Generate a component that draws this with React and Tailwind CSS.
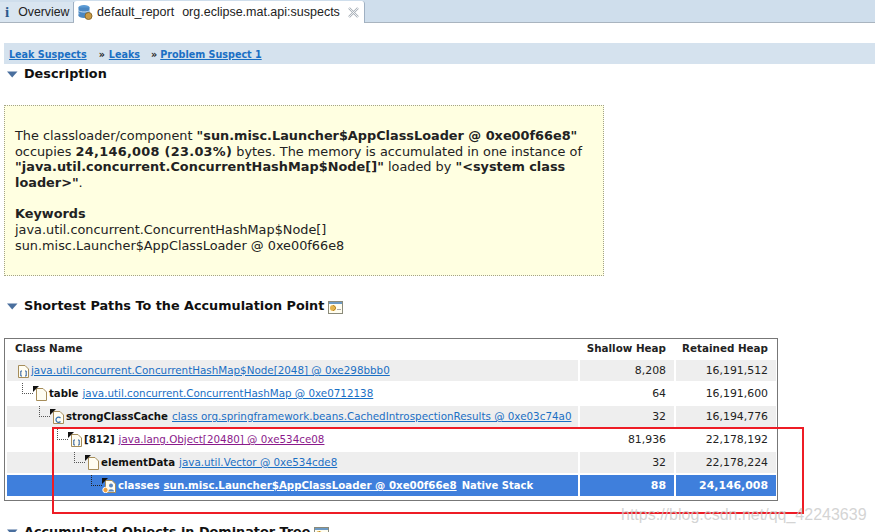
const font = "font-['DejaVu_Sans',sans-serif]";

function Triangle() {
  return (
    <svg width="11" height="7" viewBox="0 0 11 7" className="shrink-0">
      <path d="M0 0.5 H10.5 L5.2 6.5 Z" fill="#4a6f9e" />
    </svg>
  );
}

function Heading({ children, icon }) {
  return (
    <div className="flex items-center gap-[6px] pl-[7px] h-[18px] text-[12.8px] font-bold text-[#111]">
      <Triangle />
      <span className="whitespace-nowrap">{children}</span>
      {icon && <ExportIcon />}
    </div>
  );
}

function ExportIcon() {
  return (
    <svg width="15" height="14" viewBox="0 0 15 14" className="shrink-0 mt-[2px] -ml-[2px]">
      <rect x="0.5" y="1.5" width="14" height="12" fill="#fffdf0" stroke="#8a8a7a" />
      <rect x="1" y="2" width="13" height="2" fill="#6d9ac4" />
      <circle cx="5" cy="8" r="3" fill="#e3b34c" />
      <path d="M5 5 L8 8 L5 11" fill="none" stroke="#b98a2c" />
      <rect x="9" y="9" width="4" height="1" fill="#aaa" />
    </svg>
  );
}

function Connector({ selected }) {
  const c = selected ? 'border-[#222]' : 'border-[#555]';
  return <span className={`w-[11px] h-[11px] border-l border-b border-dotted ${c} mb-[10px] shrink-0`} />;
}

function ObjIcon({ kind }) {
  return (
    <svg width="15" height="15" viewBox="0 0 15 15" className="shrink-0">
      <path d="M3.5 2.5 H10 L13.5 6 V14.5 H3.5 Z" fill="#fffdf2" stroke="#a68d5a" />
      {(kind === 'field' || kind === 'loader' || kind === 'class' || kind === 'elem') && <path d="M0 0 H6 L0 6 Z" fill="#111" />}
      {(kind === 'array' || kind === 'elem') && <path d="M7 8 H5.8 V13 H7 M10 8 H11.2 V13 H10" fill="none" stroke="#2d5f9e" />}
      {kind === 'class' && <path d="M10.5 9 A2.6 2.6 0 1 0 10.5 12.5" fill="none" stroke="#2d6fb0" strokeWidth="1.2" />}
      {kind === 'loader' && <circle cx="9" cy="7.5" r="2" fill="#5b87c0" />}
      {kind === 'loader' && <path d="M6 13.5 C6 10.5 12 10.5 12 13.5 Z" fill="#5b87c0" />}
      {kind === 'loader' && <circle cx="3.5" cy="12" r="2.7" fill="#f0a13c" stroke="#fff" />}
    </svg>
  );
}

const rows = [
  { indent: 15, icon: 'array', link: 'java.util.concurrent.ConcurrentHashMap$Node[2048] @ 0xe298bbb0', shallow: '8,208', retained: '16,191,512', root: true },
  { indent: 22, icon: 'field', name: 'table', link: 'java.util.concurrent.ConcurrentHashMap @ 0xe0712138', shallow: '64', retained: '16,191,600' },
  { indent: 39, icon: 'class', name: 'strongClassCache', link: 'class org.springframework.beans.CachedIntrospectionResults @ 0xe03c74a0', shallow: '32', retained: '16,194,776' },
  { indent: 57, icon: 'elem', name: '[812]', link: 'java.lang.Object[20480] @ 0xe534ce08', visited: true, shallow: '81,936', retained: '22,178,192' },
  { indent: 74, icon: 'field', name: 'elementData', link: 'java.util.Vector @ 0xe534cde8', shallow: '32', retained: '22,178,224' },
  { indent: 91, icon: 'loader', name: 'classes', link: 'sun.misc.Launcher$AppClassLoader @ 0xe00f66e8', suffix: 'Native Stack', shallow: '88', retained: '24,146,008', selected: true },
];

function Row({ row, index }) {
  const bg = row.selected ? 'bg-[#3f7fdc]' : index % 2 === 0 ? 'bg-[#eeeeee]' : 'bg-white';
  const text = row.selected ? 'text-white font-bold' : 'text-[#222]';
  const linkColor = row.selected ? 'text-white' : row.visited ? 'text-[#8b1a8b]' : 'text-[#1a6fc4]';
  return (
    <div className={`grid grid-cols-[571px_94px_100px] gap-x-[2px] h-[21px] mt-[2px] text-[10.9px] leading-[21px] ${text}`}>
      <div className={`${bg} flex items-center whitespace-nowrap overflow-hidden`} style={{ paddingLeft: row.indent - 7 }}>
        {!row.root && <Connector selected={row.selected} />}
        <ObjIcon kind={row.icon} />
        {row.name && <span className={`font-bold text-[10.2px] ml-[1px] mr-[4px] ${row.selected ? 'text-white' : 'text-[#111]'}`}>{row.name}</span>}
        <a className={`underline ${row.selected ? 'text-[10.25px]' : 'text-[10.35px]'} ${row.root ? 'ml-[1px]' : ''} ${linkColor}`}>{row.link}</a>
        {row.suffix && <span className="ml-[5px] text-[10px]">{row.suffix}</span>}
      </div>
      <div className={`${bg} text-right pr-[8px]`}>{row.shallow}</div>
      <div className={`${bg} text-right pr-[8px]`}>{row.retained}</div>
    </div>
  );
}

export default function App() {
  return (
    <div className={`${font} relative w-[875px] h-[532px] overflow-hidden bg-white`}>
      {/* tabs */}
      <div className="flex items-end h-[23px] bg-[#cfdeec] border-b border-[#a9b4bf] text-[12px] text-[#222]">
        <div className="flex items-center h-[20px] w-[74px] gap-[9px] pl-[5px] bg-[#d9e5f0] border-r border-[#9fb0c2]">
          <span className="font-['Liberation_Serif',serif] font-bold text-[15px] text-[#2c5a8c]">i</span>
          <span className="font-['Liberation_Sans',sans-serif] text-[12.3px]">Overview</span>
        </div>
        <div className="flex items-center h-[22px] w-[291px] pl-[3px] bg-white border-r border-[#9fb0c2] rounded-t-[3px] mb-[-1px]">
          <svg width="16" height="16" viewBox="0 0 16 16" className="shrink-0">
            <ellipse cx="7" cy="3.5" rx="5.5" ry="2.5" fill="#5b9bd5" />
            <rect x="1.5" y="3.5" width="11" height="8" fill="#4a87c2" />
            <path d="M1.5 6.5 C3 8.5 11 8.5 12.5 6.5 M1.5 9.5 C3 11.5 11 11.5 12.5 9.5" fill="none" stroke="#cfe2f3" />
            <ellipse cx="7" cy="11.5" rx="5.5" ry="2.5" fill="#4a87c2" />
            <circle cx="11.5" cy="12" r="3.5" fill="#c99a45" stroke="#8a6a2c" />
          </svg>
          <span className="ml-[4px] font-['Liberation_Sans',sans-serif] text-[12.5px] whitespace-nowrap">default_report</span>
          <span className="ml-[8px] font-['Liberation_Sans',sans-serif] text-[12.5px] whitespace-nowrap">org.eclipse.mat.api:suspects</span>
          <svg width="11" height="11" viewBox="0 0 11 11" className="ml-[8px] shrink-0">
            <path d="M1 1 L10 10 M10 1 L1 10" stroke="#aab2ba" strokeWidth="2.4" />
            <path d="M1 1 L10 10 M10 1 L1 10" stroke="#fff" strokeWidth="0.8" />
          </svg>
        </div>
      </div>

      <div className="pl-[4px]">
        {/* breadcrumb */}
        <div className="flex items-center h-[21px] mt-[20px] pl-[5px] pt-[3px] bg-[#d5e2ee] text-[9.6px] font-bold text-[#1a6fc4] whitespace-nowrap">
          <a className="underline">Leak Suspects</a>
          <span className="ml-[12px] mr-[1px] text-[#222]">»</span>
          <a className="underline ml-[3px]">Leaks</a>
          <span className="ml-[11px] mr-[1px] text-[#222]">»</span>
          <a className="underline ml-[2px]">Problem Suspect 1</a>
        </div>

        <div className="mt-[1px] -ml-[4px]">
          <Heading>Description</Heading>
        </div>

        {/* description box */}
        <div className="w-[600px] h-[171px] mt-[22px] pt-[22px] pl-[10px] bg-[#ffffe1] border border-dotted border-[#a3a38a] text-[12.85px] leading-[15.6px] text-[#222]">
          <p>
            The classloader/component <b>"sun.misc.Launcher$AppClassLoader @ 0xe00f66e8"</b>
            <br />
            occupies <b className="tracking-[0.3px]">24,146,008 (23.03%)</b> bytes. The memory is accumulated in one instance of
            <br />
            <b className="tracking-[0.04px]">"java.util.concurrent.ConcurrentHashMap$Node[]"</b> loaded by <b>"&lt;system class</b>
            <br />
            <b>loader&gt;"</b>.
          </p>
          <p className="mt-[16px] font-bold">Keywords</p>
          <p>java.util.concurrent.ConcurrentHashMap$Node[]</p>
          <p>sun.misc.Launcher$AppClassLoader @ 0xe00f66e8</p>
        </div>

        <div className="mt-[21px] -ml-[4px]">
          <Heading icon>Shortest Paths To the Accumulation Point</Heading>
        </div>

        {/* table */}
        <div className="w-[774px] h-[163px] mt-[23px] px-[2px] border border-[#777] bg-white">
          <div className="grid grid-cols-[571px_94px_100px] gap-x-[2px] h-[19px] text-[10.35px] font-bold leading-[19px] text-[#222]">
            <div className="pl-[8px]">Class Name</div>
            <div className="text-right pr-[8px] whitespace-nowrap">Shallow Heap</div>
            <div className="text-right pr-[8px] whitespace-nowrap">Retained Heap</div>
          </div>
          {rows.map((row, i) => (
            <Row key={i} row={row} index={i} />
          ))}
        </div>

        <div className="mt-[22px] -ml-[4px]">
          <Heading icon>Accumulated Objects in Dominator Tree</Heading>
        </div>
      </div>

      {/* red annotation box drawn over the screenshot */}
      <div className="absolute left-[52px] top-[427px] w-[752px] h-[87px] border-2 border-[#ee1c25]" />
      <div className="absolute left-[621px] top-[503px] font-['Liberation_Sans',sans-serif] text-[16px] text-[#c9c9c9]/80 whitespace-nowrap">
        https://blog.csdn.net/qq_42243639
      </div>
    </div>
  );
}
